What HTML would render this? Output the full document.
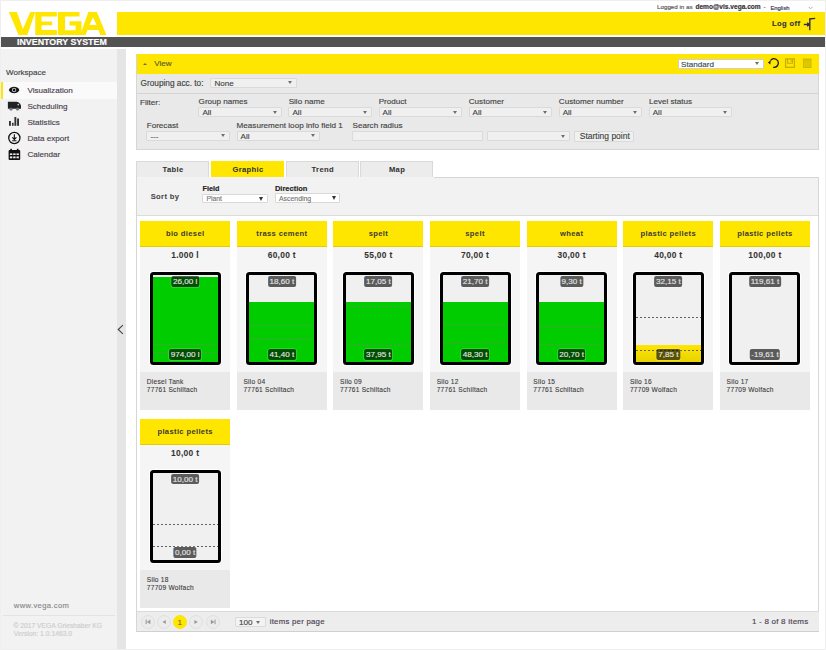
<!DOCTYPE html>
<html><head><meta charset="utf-8">
<style>
*{margin:0;padding:0;box-sizing:border-box}
html,body{width:826px;height:650px;overflow:hidden;background:#fff}
body{position:relative;font-family:"Liberation Sans",sans-serif;color:#333;-webkit-text-stroke:0.15px currentColor}
.a{position:absolute;white-space:nowrap}
.frame{position:absolute;left:0;top:0;width:826px;height:650px;border:1px solid #efefef;pointer-events:none;z-index:50}
.y{background:#ffe600}
.sel{position:absolute;background:#f0f0f0;border:1px solid #dadada;border-radius:1px}
.sel .t{position:absolute;left:3px;top:0;font-size:8.1px;line-height:9px;color:#444}
.sel .ar{position:absolute;right:4.2px;top:2.4px;width:0;height:0;border-left:2.3px solid transparent;border-right:2.3px solid transparent;border-top:3.9px solid #6f6f6f}
.lbl{position:absolute;font-size:8.1px;color:#444;line-height:9px}

.card{position:absolute;width:90px;height:189px;background:#f5f5f5}
.ch{position:absolute;left:0;top:0;width:90px;height:26px;background:#ffe600;border-bottom:0.8px solid #e2cd00;text-align:center;font-weight:bold;font-size:7.6px;letter-spacing:0.35px;text-indent:0.35px;line-height:26.6px;color:#3d3a30;-webkit-text-stroke:0}
.cap{position:absolute;left:0;top:29.4px;width:90px;text-align:center;font-weight:bold;font-size:8.4px;letter-spacing:0.3px;text-indent:0.3px;-webkit-text-stroke:0.05px;line-height:10px;color:#333}
.tank{position:absolute;left:9.7px;top:51px;width:71px;height:93.3px;border:3.2px solid #000;border-radius:3.5px;background:#f0f0f0;box-shadow:0 0 0 1px #fff;overflow:hidden}
.fill{position:absolute;left:0;bottom:0;width:100%}
.dash{position:absolute;left:0;width:100%;height:1px;background:repeating-linear-gradient(90deg,#626262 0 2px,transparent 2px 4px)}
.g .dash{background:repeating-linear-gradient(90deg,#5c945c 0 2px,transparent 2px 4px)}
.lab{position:absolute;left:50%;transform:translateX(-50%);height:10.8px;padding:1.1px 1.5px 0;background:rgba(0,0,0,0.62);border-radius:2px;box-shadow:0 0 0 0.6px rgba(255,255,255,0.35);color:#e4e4e4;font-weight:normal;font-size:8.1px;line-height:9.7px;white-space:nowrap}
.lt{top:1.1px}
.lb{bottom:1.8px}
.info{position:absolute;left:0;top:151px;width:90px;height:38px;background:#e9e9e9;padding:6.6px 0 0 6.8px;font-size:6.6px;letter-spacing:0.25px;line-height:7.8px;color:#3a3a3a;-webkit-text-stroke:0.1px}

.pb{position:absolute;top:615.2px;width:14px;height:14px;border-radius:50%;border:1px solid #e0e0e0;background:#ececec}
.pb svg{position:absolute;left:-1px;top:-1px}
</style></head>
<body>
<div class="frame"></div>

<!-- header -->
<div class="a" style="left:657px;top:3px;font-size:6.22px;line-height:8px;color:#555">Logged in as</div>
<div class="a" style="left:695.4px;top:3px;font-size:6.59px;line-height:8px;font-weight:bold;color:#333">demo@vis.vega.com</div>
<div class="a" style="left:763.5px;top:3px;font-size:6.5px;line-height:8px;color:#555">-</div>
<div class="a" style="left:770.4px;top:3.5px;font-size:5.85px;line-height:8px;color:#335">English</div>
<svg class="a" style="left:807px;top:5px" width="8" height="6" viewBox="0 0 8 6"><path d="M1.6,1.8 L3.6,3.8 L5.6,1.8" stroke="#999" stroke-width="0.8" fill="none"/></svg>

<svg class="a" style="left:0;top:0" width="120" height="40" viewBox="0 0 120 40">
 <g fill="#ffe600">
  <polygon points="8.9,12 16.9,12 22.9,29 30.3,12 35.3,12 27.3,35 18.6,35"/>
  <path d="M35.3,12 H56.9 V16.6 H41.6 V21.4 H52.2 V25.3 H41.6 V30.1 H56.9 V35 H35.3 Z"/>
  <path d="M57.9,12 H79.5 V16.5 H65 V30.2 H75.6 V25.4 H69.6 V21.3 H81.5 V35 H57.9 Z"/>
  <path d="M80.2,35 L88.3,12 H96.9 L106.4,35 H100.2 L98.5,29.9 H87.4 L85.6,35 Z M89.5,25.1 H96.5 L93,17.2 Z"/>
 </g>
</svg>
<div class="a y" style="left:117px;top:12px;width:708px;height:23px"></div>
<div class="a" style="left:772px;top:20.2px;font-size:7.5px;letter-spacing:0.42px;line-height:8px;font-weight:bold;color:#333">Log off</div>
<svg class="a" style="left:802px;top:16.6px" width="16" height="15" viewBox="0 0 16 15">
 <g stroke="#2e3050" stroke-width="1.4" fill="none">
  <path d="M1.8,7.5 H7"/>
  <path d="M5.2,5.8 L7.2,7.5 L5.2,9.2" fill="#2e3050"/>
  <path d="M7.8,13.2 V2 L13.2,1.4"/>
 </g>
</svg>
<div class="a" style="left:1px;top:37px;width:824px;height:10px;background:#535353"></div>
<div class="a" style="left:17px;top:37px;font-size:8.85px;line-height:10px;font-weight:bold;color:#fff">INVENTORY SYSTEM</div>

<!-- sidebar -->
<div class="a" style="left:1px;top:49px;width:116px;height:600px;background:#f2f2f2"></div>
<div class="a" style="left:117px;top:49px;width:9px;height:600px;background:#e5e5e5"></div>
<svg class="a" style="left:117px;top:324px" width="8" height="11" viewBox="0 0 8 11"><path d="M5.9,1.2 L1.2,5.5 L5.9,9.8" stroke="#444" stroke-width="1.1" fill="none"/></svg>

<div class="a" style="left:6px;top:67.5px;font-size:8.03px;line-height:10px;color:#444">Workspace</div>
<div class="a" style="left:1px;top:82px;width:116px;height:16.5px;background:#fafafa"></div>
<div class="a y" style="left:1px;top:82px;width:2px;height:16.5px"></div>
<div class="a" style="left:27.4px;top:85.7px;font-size:8.11px;line-height:10px;color:#4a4050">Visualization</div>
<div class="a" style="left:27.4px;top:101.7px;font-size:8.11px;line-height:10px;color:#4a4050">Scheduling</div>
<div class="a" style="left:27.4px;top:117.7px;font-size:8.11px;line-height:10px;color:#4a4050">Statistics</div>
<div class="a" style="left:27.4px;top:133.7px;font-size:8.11px;line-height:10px;color:#4a4050">Data export</div>
<div class="a" style="left:27.4px;top:149.7px;font-size:8.11px;line-height:10px;color:#4a4050">Calendar</div>

<div class="a" style="left:13.8px;top:600.8px;font-size:7.6px;letter-spacing:0.37px;line-height:10px;color:#8a8a8a">www.vega.com</div>
<div class="a" style="left:3px;top:615px;width:112px;height:1px;background:#e3e3e3"></div>
<div class="a" style="left:13.4px;top:622.3px;font-size:6.72px;line-height:8px;color:#cdcdcd">© 2017 VEGA Grieshaber KG</div>
<div class="a" style="left:13.8px;top:629.5px;font-size:6.77px;line-height:8px;color:#cdcdcd">Version: 1.0.1463.0</div>


<!-- sidebar icons -->
<svg class="a" style="left:0;top:80px" width="26" height="84" viewBox="0 80 26 84">
 <path d="M8.8,90 C10.8,85.6 17.4,85.6 19.4,90 C17.4,94.4 10.8,94.4 8.8,90 Z" fill="#111"/>
 <circle cx="14.1" cy="90" r="2.2" fill="#bbb"/>
 <circle cx="14.1" cy="90" r="1.25" fill="#111"/>
 <path d="M7.9,101.7 H16.6 Q18.4,101.7 19.8,103.6 L21,105.3 V108.7 H7.9 Z" fill="#222"/>
 <circle cx="18.3" cy="104.6" r="0.85" fill="#ccc"/>
 <circle cx="11" cy="109" r="1.6" fill="#707070"/>
 <circle cx="17.5" cy="109" r="1.6" fill="#707070"/>
 <rect x="9" y="121" width="1.9" height="4.8" fill="#333"/>
 <rect x="12" y="122.8" width="1.6" height="3" fill="#333"/>
 <rect x="14.4" y="117" width="1.9" height="8.8" fill="#333"/>
 <rect x="17.1" y="118.5" width="1.9" height="7.3" fill="#333"/>
 <circle cx="14.35" cy="138" r="5.6" stroke="#111" stroke-width="1.3" fill="none"/>
 <path d="M14.35,134.2 V139.3 M12.3,137.4 L14.35,139.5 L16.4,137.4 M12.2,140.8 H16.5" stroke="#111" stroke-width="1.1" fill="none"/>
 <rect x="8.6" y="150" width="11.6" height="10.1" rx="1" fill="#111"/>
 <rect x="10.3" y="148.8" width="1.6" height="2.6" fill="#111"/>
 <rect x="16.9" y="148.8" width="1.6" height="2.6" fill="#111"/>
 <g fill="#eee"><rect x="9.9" y="153.4" width="2.4" height="1.6"/><rect x="13.2" y="153.4" width="2.4" height="1.6"/><rect x="16.5" y="153.4" width="2.4" height="1.6"/>
 <rect x="9.9" y="156.4" width="2.4" height="1.9"/><rect x="13.2" y="156.4" width="2.4" height="1.9"/><rect x="16.5" y="156.4" width="2.4" height="1.9"/></g>
</svg>

<div class="a" style="left:136px;top:54px;width:683px;height:96px;background:#e9e9e9;border:1px solid #d6d6d6;border-top:none"></div>
<div class="a y" style="left:137px;top:54px;width:681.6px;height:20px"></div>
<div class="a" style="left:142.8px;top:62.9px;width:0;height:0;border-left:2.5px solid transparent;border-right:2.5px solid transparent;border-bottom:2.8px solid #6d6468"></div>
<div class="a" style="left:154.3px;top:59px;font-size:8.1px;line-height:10px;color:#5e5a30">View</div>
<div class="sel" style="left:677.6px;top:58.9px;width:86.8px;height:10px;background:#fff;border-color:#cfcfcf"><div class="t" style="left:2.5px;top:0px;color:#3a4a5a">Standard</div><div class="ar"></div></div>
<svg class="a" style="left:766px;top:57px" width="50" height="14" viewBox="766 57 50 14">
 <path d="M773.2,67.3 A4.3,4.3 0 1 0 770.6,60.4" stroke="#1a1a1a" stroke-width="1.25" fill="none"/>
 <path d="M770.9,59.9 L770.2,64.6 L768.0,62.6 Z" fill="#1a1a1a"/>
 <rect x="785.6" y="58.9" width="8.8" height="8.4" stroke="#c4af00" stroke-width="1.3" fill="none"/>
 <path d="M787.6,58.9 V63.3 H792.4 V58.9" stroke="#c4af00" stroke-width="1.1" fill="none"/>
 <rect x="790.4" y="59.6" width="1.2" height="2.2" fill="#cbb600"/>
 <rect x="802.6" y="58.5" width="9.2" height="1.7" rx="0.6" fill="#d0bb00"/>
 <rect x="803.4" y="60.8" width="7.6" height="6.7" fill="#e2cc00" stroke="#cdb700" stroke-width="0.9"/>
 <path d="M805.9,61.8 V66.8 M808.1,61.8 V66.8" stroke="#d4be00" stroke-width="0.6"/>
</svg>
<div class="a" style="left:137px;top:93px;width:681px;height:1px;background:#d4d4d4"></div>
<div class="lbl" style="left:140.5px;top:78.5px;font-size:8.27px">Grouping acc. to:</div>
<div class="sel" style="left:210.4px;top:77.7px;width:87.1px;height:10.2px;"><div class="t">None</div><div class="ar"></div></div>
<div class="lbl" style="left:140px;top:97.5px;font-size:8.1px">Filter:</div>
<div class="lbl" style="left:198.60px;top:97.1px">Group names</div>
<div class="sel" style="left:198.4px;top:107.4px;width:83.6px;height:10px;"><div class="t">All</div><div class="ar"></div></div>
<div class="lbl" style="left:288.66px;top:97.1px">Silo name</div>
<div class="sel" style="left:288.46px;top:107.4px;width:83.6px;height:10px;"><div class="t">All</div><div class="ar"></div></div>
<div class="lbl" style="left:378.72px;top:97.1px">Product</div>
<div class="sel" style="left:378.52px;top:107.4px;width:83.6px;height:10px;"><div class="t">All</div><div class="ar"></div></div>
<div class="lbl" style="left:468.78px;top:97.1px">Customer</div>
<div class="sel" style="left:468.58px;top:107.4px;width:83.6px;height:10px;"><div class="t">All</div><div class="ar"></div></div>
<div class="lbl" style="left:558.84px;top:97.1px">Customer number</div>
<div class="sel" style="left:558.64px;top:107.4px;width:83.6px;height:10px;"><div class="t">All</div><div class="ar"></div></div>
<div class="lbl" style="left:648.90px;top:97.1px">Level status</div>
<div class="sel" style="left:648.7px;top:107.4px;width:83.6px;height:10px;"><div class="t">All</div><div class="ar"></div></div>
<div class="lbl" style="left:146.7px;top:121px">Forecast</div>
<div class="sel" style="left:146.4px;top:130.8px;width:83.3px;height:10.4px;"><div class="t">---</div><div class="ar"></div></div>
<div class="lbl" style="left:236.6px;top:121px">Measurement loop info field 1</div>
<div class="sel" style="left:236.5px;top:130.8px;width:83.3px;height:10.4px;"><div class="t">All</div><div class="ar"></div></div>
<div class="lbl" style="left:352.5px;top:121px">Search radius</div>
<div class="sel" style="left:352.2px;top:131.2px;width:131.2px;height:10.2px"></div>
<div class="sel" style="left:486.9px;top:131.2px;width:83.3px;height:10.2px"><div class="ar"></div></div>
<div class="sel" style="left:573.5px;top:130.7px;width:60.1px;height:10.9px"><div class="t" style="left:5.3px;top:0.5px;font-size:8.49px">Starting point</div></div>
<div class="a" style="left:136.4px;top:161px;width:73px;height:16.5px;background:#ececec;border:1px solid #d9d9d9;border-bottom:none;text-align:center;font-weight:bold;font-size:7.6px;letter-spacing:0.35px;text-indent:0.35px;line-height:16.4px;color:#333;-webkit-text-stroke:0.05px">Table</div>
<div class="a" style="left:211.4px;top:161px;width:73px;height:16.5px;background:#ffe600;border:none;padding-top:1px;text-align:center;font-weight:bold;font-size:7.6px;letter-spacing:0.35px;text-indent:0.35px;line-height:16.4px;color:#333;-webkit-text-stroke:0.05px">Graphic</div>
<div class="a" style="left:286.1px;top:161px;width:73px;height:16.5px;background:#ececec;border:1px solid #d9d9d9;border-bottom:none;text-align:center;font-weight:bold;font-size:7.6px;letter-spacing:0.35px;text-indent:0.35px;line-height:16.4px;color:#333;-webkit-text-stroke:0.05px">Trend</div>
<div class="a" style="left:360.4px;top:161px;width:73px;height:16.5px;background:#ececec;border:1px solid #d9d9d9;border-bottom:none;text-align:center;font-weight:bold;font-size:7.6px;letter-spacing:0.35px;text-indent:0.35px;line-height:16.4px;color:#333;-webkit-text-stroke:0.05px">Map</div>
<div class="a" style="left:136px;top:177.2px;width:683px;height:455px;border:1px solid #d6d6d6;background:#fff"></div>
<div class="a" style="left:137px;top:177px;width:297px;height:1.2px;background:#f4f4f8"></div>
<div class="a" style="left:137px;top:178.2px;width:681px;height:37.5px;background:#f2f2f2;border-bottom:1px solid #dcdcdc"></div>
<div class="a" style="left:150.7px;top:192px;font-weight:bold;font-size:7.6px;letter-spacing:0.35px;line-height:10px;color:#444;-webkit-text-stroke:0.05px">Sort by</div>
<div class="a" style="left:202.6px;top:183.5px;font-weight:bold;font-size:7.2px;line-height:9px;color:#222">Field</div>
<div class="a" style="left:274.9px;top:183.5px;font-weight:bold;font-size:7.5px;line-height:9px;color:#222">Direction</div>
<div class="sel" style="left:202px;top:193.5px;width:66px;height:9.8px;background:#fff;border-color:#d9d9d9"><div class="t" style="left:3.4px;top:-0.5px;font-size:6.8px;color:#777">Plant</div><div class="ar" style="border-top-color:#333;right:3.6px;top:2px;border-left-width:2.2px;border-right-width:2.2px;border-top-width:4px"></div></div>
<div class="sel" style="left:274.6px;top:193.4px;width:65.6px;height:9.8px;background:#fff;border-color:#d9d9d9"><div class="t" style="left:3.4px;top:-0.5px;font-size:6.9px;color:#777">Ascending</div><div class="ar" style="border-top-color:#333;right:3.6px;top:2px;border-left-width:2.2px;border-right-width:2.2px;border-top-width:4px"></div></div>
<!-- CARDS -->
<div class="card" style="left:140.00px;top:220.70px"><div class="ch">bio diesel</div><div class="cap">1.000 l</div><div class="tank g"><div class="fill" style="height:84.54px;background:#00cc00"></div><div class="dash" style="top:69.30px"></div><div class="dash" style="top:77.50px"></div><div class="lab lt">26,00 l</div><div class="lab lb">974,00 l</div></div><div class="info"><div>Diesel Tank</div><div>77761 Schiltach</div></div></div>
<div class="card" style="left:236.63px;top:220.70px"><div class="ch">trass cement</div><div class="cap">60,00 t</div><div class="tank g"><div class="fill" style="height:59.89px;background:#00cc00"></div><div class="dash" style="top:50.60px"></div><div class="dash" style="top:64.60px"></div><div class="lab lt">18,60 t</div><div class="lab lb">41,40 t</div></div><div class="info"><div>Silo 04</div><div>77761 Schiltach</div></div></div>
<div class="card" style="left:333.26px;top:220.70px"><div class="ch">spelt</div><div class="cap">55,00 t</div><div class="tank g"><div class="fill" style="height:59.89px;background:#00cc00"></div><div class="dash" style="top:31.30px"></div><div class="dash" style="top:70.60px"></div><div class="lab lt">17,05 t</div><div class="lab lb">37,95 t</div></div><div class="info"><div>Silo 09</div><div>77761 Schiltach</div></div></div>
<div class="card" style="left:429.89px;top:220.70px"><div class="ch">spelt</div><div class="cap">70,00 t</div><div class="tank g"><div class="fill" style="height:59.89px;background:#00cc00"></div><div class="dash" style="top:49.40px"></div><div class="dash" style="top:67.80px"></div><div class="lab lt">21,70 t</div><div class="lab lb">48,30 t</div></div><div class="info"><div>Silo 12</div><div>77761 Schiltach</div></div></div>
<div class="card" style="left:526.52px;top:220.70px"><div class="ch">wheat</div><div class="cap">30,00 t</div><div class="tank g"><div class="fill" style="height:59.89px;background:#00cc00"></div><div class="dash" style="top:51.70px"></div><div class="dash" style="top:69.20px"></div><div class="lab lt">9,30 t</div><div class="lab lb">20,70 t</div></div><div class="info"><div>Silo 15</div><div>77761 Schiltach</div></div></div>
<div class="card" style="left:623.15px;top:220.70px"><div class="ch">plastic pellets</div><div class="cap">40,00 t</div><div class="tank"><div class="fill" style="height:17.01px;background:linear-gradient(#ffe600,#e8d200)"></div><div class="dash" style="top:42.80px"></div><div class="dash" style="top:75.40px"></div><div class="lab lt">32,15 t</div><div class="lab lb">7,85 t</div></div><div class="info"><div>Silo 16</div><div>77709 Wolfach</div></div></div>
<div class="card" style="left:719.78px;top:220.70px"><div class="ch">plastic pellets</div><div class="cap">100,00 t</div><div class="tank"><div class="lab lt">119,61 t</div><div class="lab lb">-19,61 t</div></div><div class="info"><div>Silo 17</div><div>77709 Wolfach</div></div></div>
<div class="card" style="left:140.00px;top:418.50px"><div class="ch">plastic pellets</div><div class="cap">10,00 t</div><div class="tank"><div class="dash" style="top:51.80px"></div><div class="dash" style="top:73.80px"></div><div class="lab lt">10,00 t</div><div class="lab lb">0,00 t</div></div><div class="info"><div>Silo 18</div><div>77709 Wolfach</div></div></div>
<!-- CONTENT -->
<!-- pager -->
<div class="a" style="left:137px;top:611.2px;width:681.6px;height:21px;background:#ededed;border-top:1px solid #dadada;border-bottom:1px solid #d0d0d0"></div>
<div class="pb" style="left:140.9px"><svg width="14" height="14" viewBox="0 0 14 14"><rect x="4.6" y="4.6" width="1.1" height="4.6" fill="#9a9a9a"/><path d="M9.4,4.6 L5.8,6.9 L9.4,9.2 Z" fill="#9a9a9a"/></svg></div>
<div class="pb" style="left:156.6px"><svg width="14" height="14" viewBox="0 0 14 14"><path d="M8.8,4.9 L5.4,7 L8.8,9.1 Z" fill="#9a9a9a"/></svg></div>
<div class="pb" style="left:172.8px;background:#ffe600;border-color:#ffe600;font-size:8px;line-height:13.4px;text-align:center;color:#555;-webkit-text-stroke:0">1</div>
<div class="pb" style="left:189.3px"><svg width="14" height="14" viewBox="0 0 14 14"><path d="M5.4,4.9 L8.8,7 L5.4,9.1 Z" fill="#9a9a9a"/></svg></div>
<div class="pb" style="left:206.1px"><svg width="14" height="14" viewBox="0 0 14 14"><path d="M4.8,4.6 L8.4,6.9 L4.8,9.2 Z" fill="#9a9a9a"/><rect x="8.5" y="4.6" width="1.1" height="4.6" fill="#9a9a9a"/></svg></div>
<div class="sel" style="left:234.9px;top:617.3px;width:30.8px;height:10.2px;background:#f3f3f3"><div class="t" style="left:3px;top:-0.2px;font-size:8.1px;color:#444">100</div><div class="ar" style="right:5px;top:2.6px"></div></div>
<div class="a" style="left:269.7px;top:616.6px;font-size:7.8px;letter-spacing:0.25px;line-height:10px;color:#4a4050">items per page</div>
<div class="a" style="left:752px;top:617px;font-size:8px;letter-spacing:0.22px;line-height:10px;color:#4a4050">1 - 8 of 8 items</div>

</body></html>
